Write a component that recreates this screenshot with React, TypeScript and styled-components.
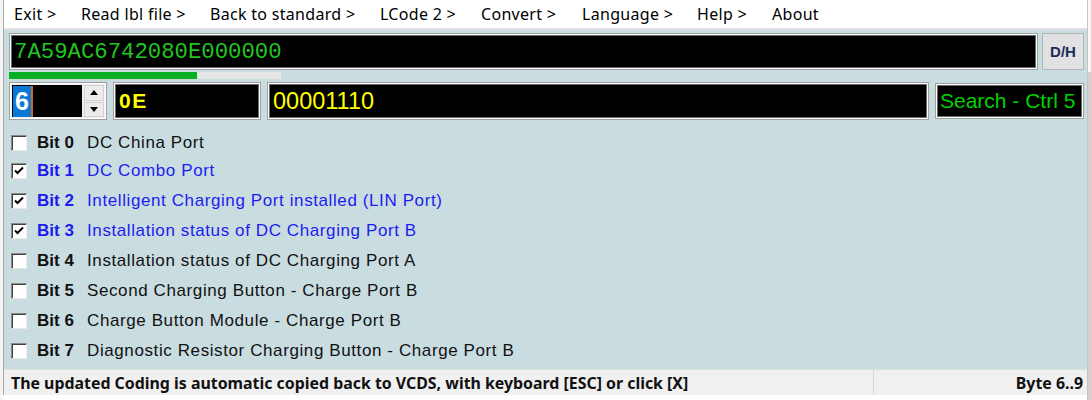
import React from "react";
import styled, { createGlobalStyle } from "styled-components";

const Global = createGlobalStyle`
  html, body { margin: 0; padding: 0; background: #ffffff; }
  body { width: 1091px; height: 400px; overflow: hidden; }
`;

const Page = styled.div`
  width: 1091px;
  height: 400px;
  display: flex;
  flex-direction: row;
  background: #ffffff;
  overflow: hidden;
`;

const LeftGap = styled.div`
  width: 3px;
  background: #f4f4f4;
`;

const RightStrip = styled.div`
  flex: 1;
  display: flex;
  flex-direction: column;
  border-left: 1px solid #c4c4c4;
`;

const StripTop = styled.div`
  height: 72px;
  background: #f8f8f8;
`;

const StripBody = styled.div`
  flex: 1;
  background: #d2d2d2;
`;

const Window = styled.div`
  width: 1083px;
  height: 395px;
  display: flex;
  flex-direction: column;
  border-left: 1px solid #a8a8a8;
  background: #c9dde1;
`;

const MenuBar = styled.div`
  height: 28px;
  display: flex;
  align-items: center;
  background: #ffffff;
  border-bottom: 2px solid #e2e2e2;
  font-family: "Noto Sans", "Open Sans", sans-serif;
  font-size: 16px;
  letter-spacing: 0.3px;
  color: #000;
  padding-left: 10px;
`;

const MenuItem = styled.span<{ $w: number }>`
  width: ${(p) => p.$w}px;
  white-space: nowrap;
  line-height: 28px;
`;

const Content = styled.div`
  flex: 1;
  display: flex;
  flex-direction: column;
  padding: 3px 3px 0 5px;
`;

const Row = styled.div`
  display: flex;
  align-items: stretch;
`;

const Field = styled.div<{ $w?: number }>`
  background: #000;
  border: 1px solid #a0a0a0;
  box-shadow: inset 0 0 0 1px #ffffff, inset 0 0 0 2px #6a6a6a;
  display: flex;
  align-items: center;
  overflow: hidden;
  box-sizing: border-box;
  ${(p) => (p.$w ? `width: ${p.$w}px;` : "flex: 1;")}
`;

const HexField = styled(Field)`
  height: 37px;
  padding-left: 4px;
`;

const HexText = styled.span`
  font-family: "Liberation Mono", "DejaVu Sans Mono", monospace;
  font-size: 22.3px;
  color: #22c622;
`;

const DHButton = styled.div`
  width: 42px;
  height: 37px;
  margin-left: 4px;
  box-sizing: border-box;
  background: #e1e1e1;
  border: 1px solid #b4b4b4;
  display: flex;
  align-items: center;
  justify-content: center;
  font-family: "Liberation Sans", Arial, sans-serif;
  font-weight: bold;
  font-size: 15px;
  color: #1d2a5a;
`;

const Progress = styled.div`
  width: 272px;
  height: 7px;
  margin-top: 2px;
  background: #e6e6e6;
  display: flex;
`;

const ProgressFill = styled.div`
  height: 100%;
  background: #06b025;
`;

const Row2 = styled.div`
  display: flex;
  margin-top: 3px;
  height: 38px;
`;

const SpinBox = styled.div`
  width: 98px;
  box-sizing: border-box;
  border: 1px solid #a0a0a0;
  box-shadow: inset 0 0 0 1px #ffffff;
  display: flex;
  padding: 2px;
  background: #f0f0f0;
`;

const SpinInput = styled.div`
  width: 69px;
  background: #000;
  display: flex;
  align-items: center;
  padding-left: 1px;
`;

const Selected = styled.span`
  background: #0a78d7;
  color: #fff;
  font-family: "Liberation Sans", Arial, sans-serif;
  font-weight: bold;
  font-size: 25px;
  line-height: 31px;
  padding: 0 2px;
  border-right: 2px solid #d2691e;
`;

const SpinButtons = styled.div`
  flex: 1;
  display: flex;
  flex-direction: column;
  gap: 1px;
  margin-left: 2px;
`;

const SpinBtn = styled.div`
  flex: 1;
  background: #ececec;
  border: 1px solid #d0d0d0;
  display: flex;
  align-items: center;
  justify-content: center;
`;

const ByteField = styled(Field)`
  margin-left: 6px;
  padding-left: 5px;
`;

const YellowText = styled.span<{ $bold?: boolean; $size: number; $ls?: number }>`
  font-family: "Liberation Sans", Arial, sans-serif;
  font-weight: ${(p) => (p.$bold ? "bold" : "normal")};
  font-size: ${(p) => p.$size}px;
  letter-spacing: ${(p) => p.$ls ?? 0}px;
  color: #ffff00;
`;

const SearchField = styled(Field)`
  margin-left: 6px;
  margin-top: 1px;
  margin-bottom: 1px;
  padding-left: 4px;
`;

const SearchText = styled.span`
  font-family: "Liberation Sans", Arial, sans-serif;
  font-size: 21px;
  color: #00d000;
`;

const BitList = styled.div`
  display: flex;
  flex-direction: column;
  margin-top: 8px;
`;

const BitRow = styled.div<{ $on: boolean; $h: number }>`
  height: ${(p) => p.$h}px;
  display: flex;
  align-items: flex-end;
  padding-bottom: 6px;
  box-sizing: border-box;
  font-family: "Liberation Sans", Arial, sans-serif;
  font-size: 17px;
  line-height: 18px;
  color: ${(p) => (p.$on ? "#1c1cf0" : "#111")};
`;

const Box = styled.div`
  width: 16px;
  height: 16px;
  box-sizing: border-box;
  margin-left: 2px;
  margin-bottom: 1px;
  background: #fff;
  border-top: 1px solid #8a8a8a;
  border-left: 1px solid #8a8a8a;
  border-right: 1px solid #e8e8e8;
  border-bottom: 1px solid #e8e8e8;
  box-shadow: inset 1px 1px 0 #404040;
  display: flex;
  align-items: center;
  justify-content: center;
`;

const BitLabel = styled.span`
  font-weight: bold;
  width: 50px;
  margin-left: 10px;
`;

const BitDesc = styled.span`
  letter-spacing: 0.6px;
  white-space: nowrap;
`;

const StatusBar = styled.div`
  height: 25px;
  display: flex;
  background: #f0f0f0;
  border-top: 1px solid #e0e0e0;
  font-family: "Noto Sans", "Open Sans", sans-serif;
  font-weight: bold;
  font-size: 15.9px;
  color: #111;
`;

const StatusLeft = styled.div`
  width: 862px;
  padding-left: 7px;
  display: flex;
  align-items: center;
  border-right: 1px solid #d8d8d8;
  white-space: nowrap;
`;

const StatusRight = styled.div`
  flex: 1;
  display: flex;
  align-items: center;
  justify-content: flex-end;
  padding-right: 4px;
`;

const BottomGap = styled.div`
  height: 5px;
  background: #ffffff;
`;

const Check = () => (
  <svg width="12" height="12" viewBox="0 0 12 12">
    <path d="M2 5.5 L4.5 8 L10 2.5" stroke="#000" strokeWidth="2" fill="none" />
  </svg>
);

const Tri = ({ up }: { up: boolean }) => (
  <svg width="8" height="5" viewBox="0 0 8 5">
    <path d={up ? "M0 5 L4 0 L8 5 Z" : "M0 0 L4 5 L8 0 Z"} fill="#000" />
  </svg>
);

const menu: [string, number][] = [
  ["Exit >", 67],
  ["Read lbl file >", 129],
  ["Back to standard >", 170],
  ["LCode 2 >", 101],
  ["Convert >", 101],
  ["Language >", 115],
  ["Help >", 75],
  ["About", 60],
];

const bits: [string, boolean][] = [
  ["DC China Port", false],
  ["DC Combo Port", true],
  ["Intelligent Charging Port installed (LIN Port)", true],
  ["Installation status of DC Charging Port B", true],
  ["Installation status of DC Charging Port A", false],
  ["Second Charging Button - Charge Port B", false],
  ["Charge Button Module - Charge Port B", false],
  ["Diagnostic Resistor Charging Button - Charge Port B", false],
];

export default function App() {
  return (
    <>
      <Global />
      <Page>
        <LeftGap />
        <div>
          <Window>
            <MenuBar>
              {menu.map(([t, w]) => (
                <MenuItem key={t} $w={w}>
                  {t}
                </MenuItem>
              ))}
            </MenuBar>
            <Content>
              <Row>
                <HexField>
                  <HexText>7A59AC6742080E000000</HexText>
                </HexField>
                <DHButton>D/H</DHButton>
              </Row>
              <Progress>
                <ProgressFill style={{ width: "69%" }} />
              </Progress>
              <Row2>
                <SpinBox>
                  <SpinInput>
                    <Selected>6</Selected>
                  </SpinInput>
                  <SpinButtons>
                    <SpinBtn>
                      <Tri up />
                    </SpinBtn>
                    <SpinBtn>
                      <Tri up={false} />
                    </SpinBtn>
                  </SpinButtons>
                </SpinBox>
                <ByteField $w={148}>
                  <YellowText $bold $size={21} $ls={1.5}>
                    0E
                  </YellowText>
                </ByteField>
                <ByteField>
                  <YellowText $size={23.5}>00001110</YellowText>
                </ByteField>
                <SearchField $w={149}>
                  <SearchText>Search - Ctrl 5</SearchText>
                </SearchField>
              </Row2>
              <BitList>
                {bits.map(([d, on], i) => (
                  <BitRow key={i} $on={on} $h={i === 0 ? 30 : i === 1 ? 28 : 30}>
                    <Box>{on && <Check />}</Box>
                    <BitLabel>Bit {i}</BitLabel>
                    <BitDesc>{d}</BitDesc>
                  </BitRow>
                ))}
              </BitList>
            </Content>
            <StatusBar>
              <StatusLeft>
                The updated Coding is automatic copied back to VCDS, with keyboard [ESC] or click [X]
              </StatusLeft>
              <StatusRight>Byte 6..9</StatusRight>
            </StatusBar>
          </Window>
          <BottomGap />
        </div>
        <RightStrip>
          <StripTop />
          <StripBody />
        </RightStrip>
      </Page>
    </>
  );
}
